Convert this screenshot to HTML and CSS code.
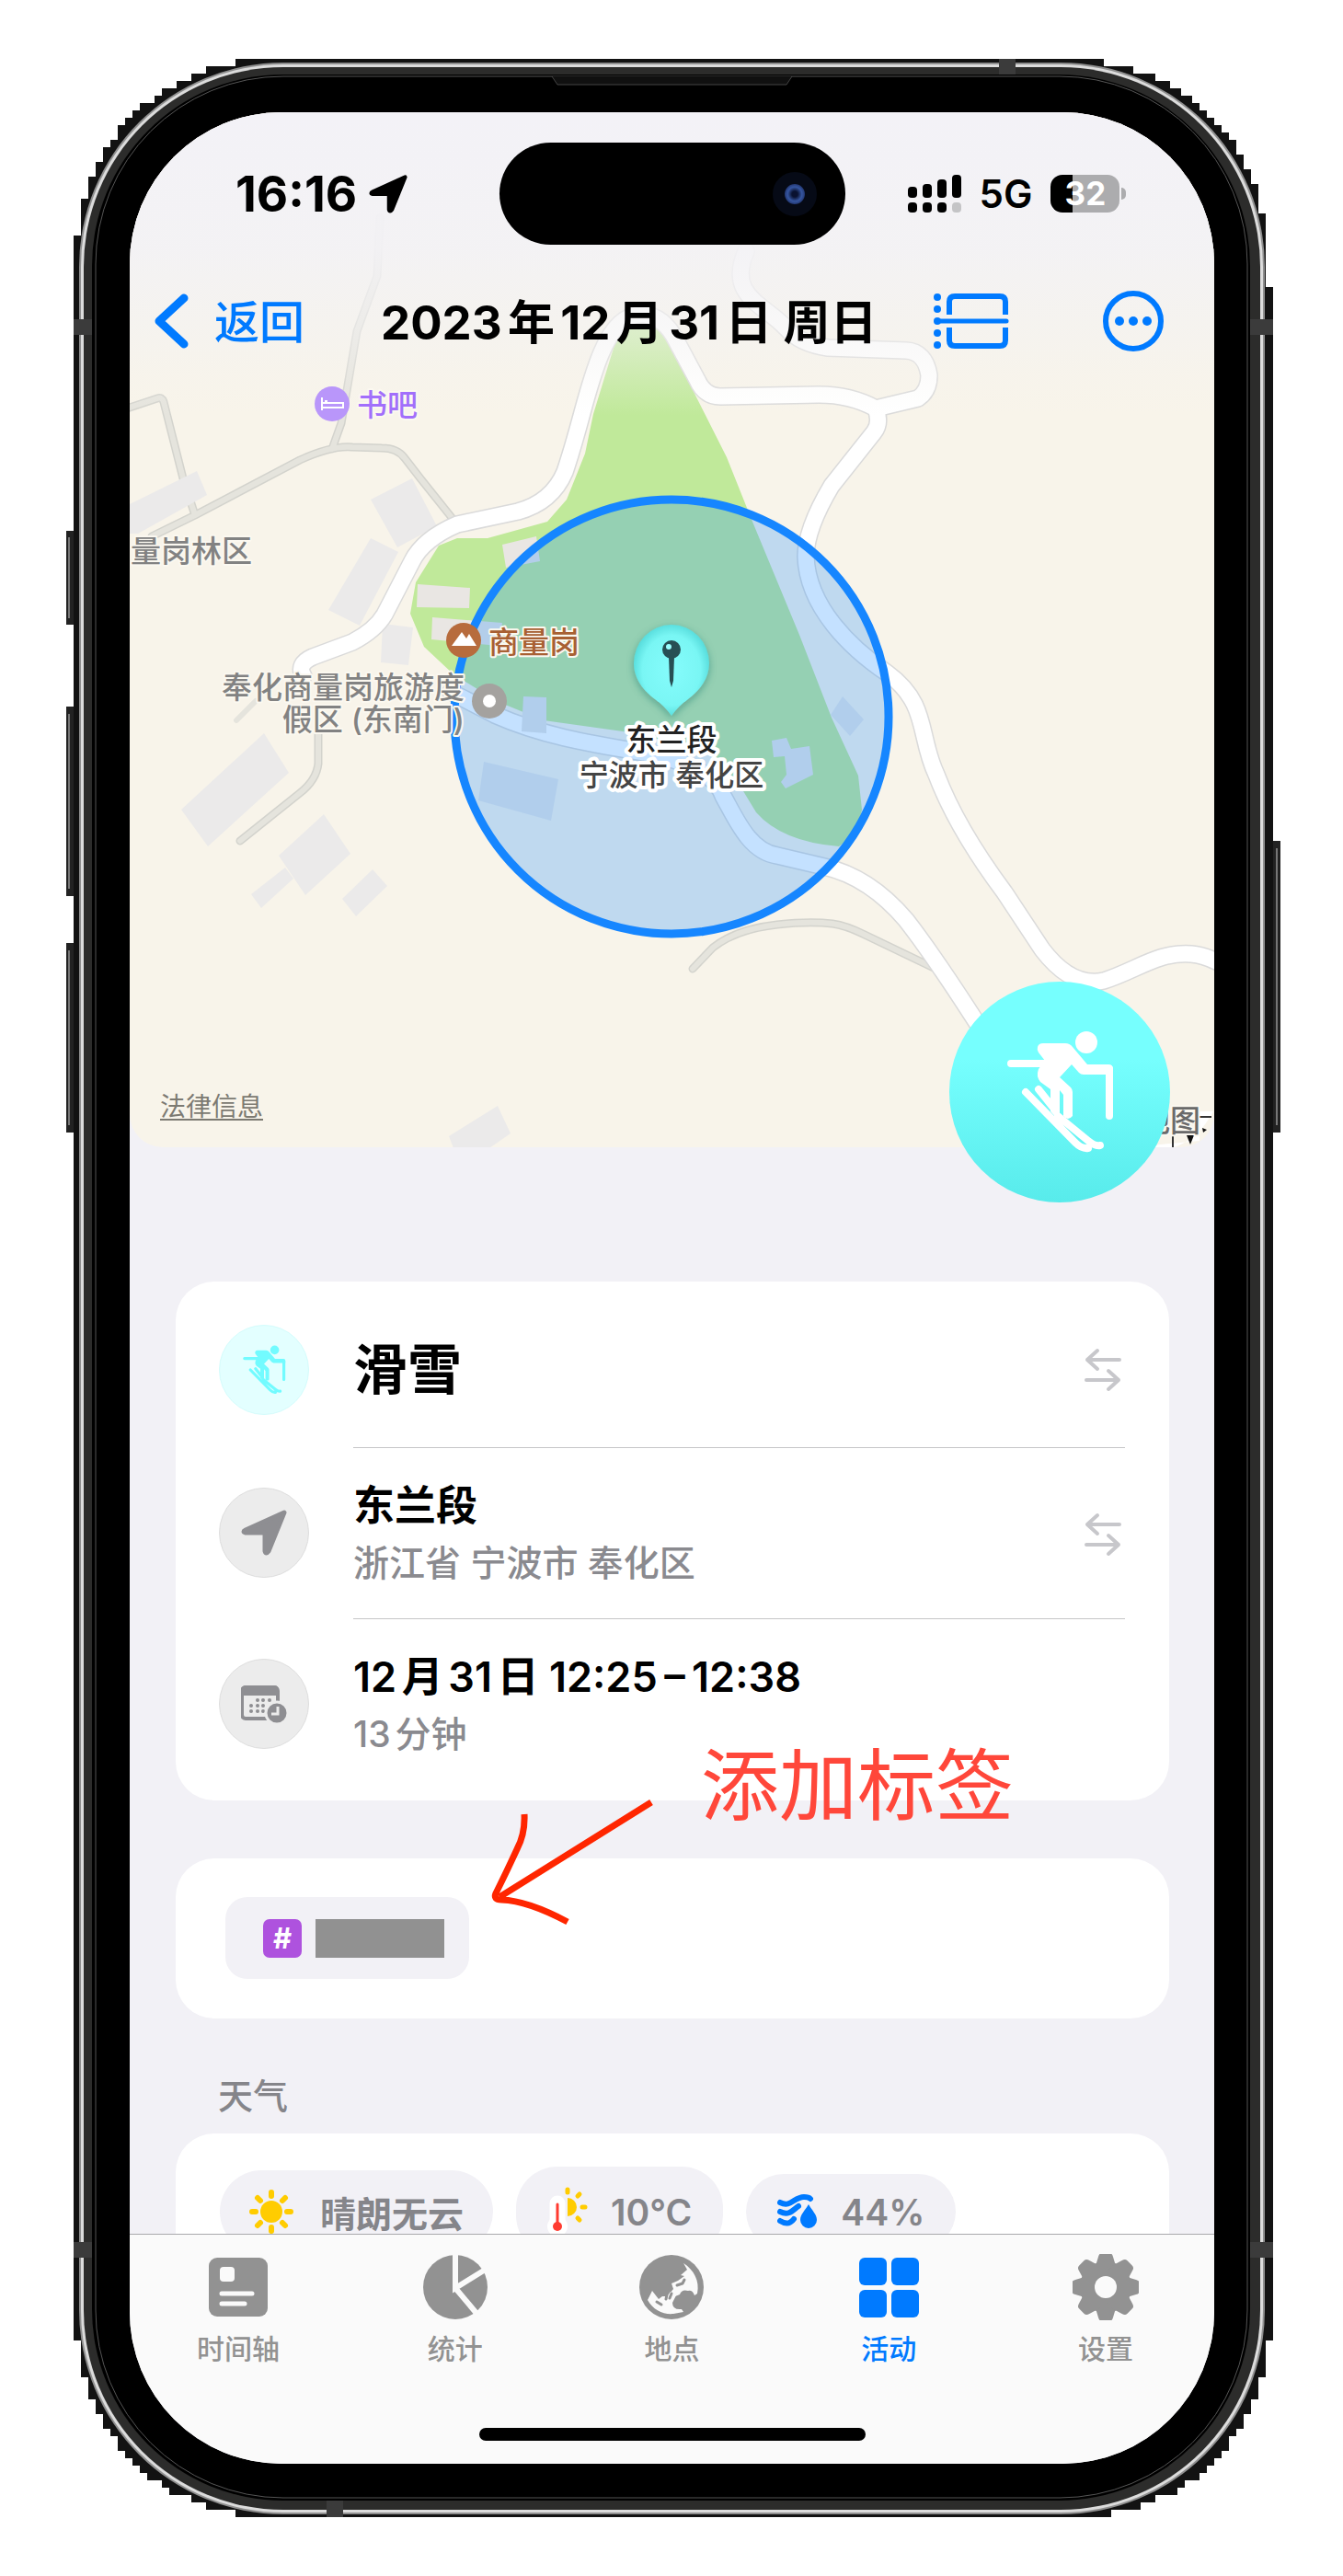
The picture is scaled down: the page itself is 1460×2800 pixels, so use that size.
FILE: index.html
```html
<!DOCTYPE html>
<html lang="zh-CN">
<head>
<meta charset="utf-8">
<meta name="viewport" content="width=device-width, initial-scale=1">
<title>2023年12月31日 周日</title>
<link rel="stylesheet" href="styles.css">
</head>
<body>
<svg class="defs" aria-hidden="true">
  <symbol id="i-ski" viewBox="1031 1067 240 240">
    <g fill="none" stroke="currentColor" stroke-width="8" stroke-linecap="round" stroke-linejoin="round">
      <path d="M1098 1156H1137M1205 1162V1213M1114 1187L1168 1242Q1175 1249 1182 1248M1128 1184L1144 1204M1149 1213L1182 1240Q1189 1246 1195 1245"/>
    </g>
    <ellipse cx="1180" cy="1133" rx="12" ry="12" fill="currentColor"/>
    <path fill="currentColor" d="M1127 1138Q1128 1134 1133 1134H1157Q1162 1134 1165 1138L1181 1157H1204Q1209 1157 1209 1162V1168H1177Q1174 1168 1172 1166L1164 1157L1151 1171L1163 1182Q1165 1184 1165 1187V1213Q1160 1219 1155 1213V1190L1151 1185V1213Q1149 1218 1141 1208V1184L1130 1176Q1125 1170 1128 1162L1135 1153L1128 1144Q1126 1141 1127 1138Z"/>
  </symbol>
  <symbol id="i-arrow" viewBox="0 0 50 50">
    <path fill="currentColor" stroke="currentColor" stroke-width="5" stroke-linejoin="round" d="M47 3L30 45Q27 49 26 45V27Q26 25 24 25H5Q1 24 5 22Z"/>
  </symbol>
  <symbol id="i-swap" viewBox="0 0 40 48">
    <path fill="none" stroke="currentColor" stroke-width="4" stroke-linecap="round" stroke-linejoin="round" d="M38 13H3M14 3L3 13L14 23M2 35H37M26 25L37 35L26 45"/>
  </symbol>
</svg>

<main class="device">
  <svg class="frame" viewBox="80 64 1304 2672" preserveAspectRatio="none" aria-hidden="true">
    <g fill="#222">
      <rect x="72" y="577" width="10" height="102"/>
      <rect x="72" y="768" width="10" height="206"/>
      <rect x="72" y="1025" width="10" height="206"/>
      <rect x="1382" y="914" width="10" height="317"/>
    </g>
    <g fill="#777">
      <rect x="74" y="584" width="2" height="88"/>
      <rect x="74" y="776" width="2" height="190"/>
      <rect x="74" y="1033" width="2" height="190"/>
      <rect x="1387" y="922" width="2" height="301"/>
    </g>
    <path fill="#121212" d="M256 64V72H224V80H208V88H192V96H176V104H168V112H152V120H144V128H136V136H128V152H120V160H112V176H104V192H96V216H88V256H80V2544H88V2584H96V2608H104V2624H112V2640H120V2648H128V2664H136V2672H144V2680H152V2688H160V2696H176V2704H184V2712H208V2720H224V2728H256V2736H1208V2728H1240V2720H1256V2712H1280V2704H1288V2696H1304V2688H1312V2680H1320V2672H1328V2664H1336V2648H1344V2640H1352V2624H1360V2608H1368V2584H1376V2544H1384V312H1376V232H1368V200H1360V184H1352V168H1344V152H1336V144H1328V136H1320V128H1312V120H1304V112H1296V104H1284V96H1272V88H1256V80H1232V72H1200V64Z"/>
    <rect x="86" y="68" width="1289" height="2665" rx="222" fill="#8f8f8f"/>
    <rect x="88" y="70" width="1285" height="2661" rx="220" fill="#dcdcdc"/>
    <rect x="91" y="73" width="1279" height="2655" rx="217" fill="#2c2c2b"/>
    <rect x="100" y="81" width="1259" height="2637" rx="208" fill="#000"/>
    <rect x="104" y="83" width="1252" height="2632" rx="204" fill="#000" stroke="#555"/>
    <path fill="#101010" stroke="#444" d="M600 83L606 92H855L861 83"/>
    <path fill="#3b3b3b" d="M80 347H100V364H80ZM80 2437H100V2454H80ZM1359 347H1384V364H1359ZM1359 2437H1384V2454H1359ZM1086 64H1104V81H1086ZM355 2718H373V2736H355Z"/>
  </svg>

  <div class="screen">
    <section class="hero">
      <svg class="map" viewBox="141 122 1179 1125" preserveAspectRatio="xMidYMid slice" role="img" aria-label="地图">
        <defs>
          <linearGradient id="fade" x1="0" y1="0" x2="0" y2="1">
            <stop offset="0" stop-color="#f3f2f7"/>
            <stop offset="0.45" stop-color="#f3f2f5" stop-opacity="0.93"/>
            <stop offset="0.75" stop-color="#f3f2f2" stop-opacity="0.5"/>
            <stop offset="1" stop-color="#f5f3ee" stop-opacity="0"/>
          </linearGradient>
          <radialGradient id="pinfill" cx="0.5" cy="0.5" r="0.55">
            <stop offset="0" stop-color="#85fcfc"/>
            <stop offset="0.7" stop-color="#79f6f4"/>
            <stop offset="1" stop-color="#4fd6d6"/>
          </radialGradient>
          <filter id="pinshadow" x="-30%" y="-30%" width="160%" height="160%">
            <feDropShadow dx="0" dy="3" stdDeviation="4" flood-color="#1f6b60" flood-opacity="0.45"/>
          </filter>
          <path id="lane" d="M141 443L171 433Q176 431 178 437L199 520L212 560M165 583L212 560L326 500Q361 484 383 486L415 487Q432 487 440 498L457 520L497 570M361 488L371 460L388 360L410 300L413 237M346 795V830Q344 848 326 862L261 914M753 1053L775 1030Q800 1010 845 1005Q880 1001 905 1004Q920 1006 940 1016L1015 1052"/>
          <path id="road" d="M330 735Q322 722 340 714L383 698Q408 685 418 668L448 610Q460 586 497 570L563 556Q600 546 614 513C632 460 638 420 654 383Q672 340 700 342Q722 344 735 370L758 413Q766 431 783 431L890 429Q925 429 952 444L998 433Q1010 425 1010 408Q1006 382 985 381L900 378Q870 374 855 357C830 330 790 322 811 273M952 444Q958 460 950 470L904 528Q876 575 876 605C878 660 925 705 965 732C1010 765 998 800 1018 842Q1040 900 1092 970L1133 1032Q1165 1074 1200 1066C1235 1055 1260 1034 1295 1037Q1308 1038 1322 1045M490 752L538 777C590 800 640 808 700 818Q775 833 786 865C800 890 815 926 845 930L896 942Q945 953 985 1000Q1020 1045 1080 1140"/>
        </defs>
        <rect x="141" y="122" width="1179" height="1125" fill="#f8f4ea"/>
        <g fill="#ebeaea">
          <path d="M403 543L448 520L475 572L432 595ZM403 585L433 600L391 680L357 663ZM416 678L449 682L444 723L414 720ZM287 797L314 840L226 920L197 880ZM352 885L381 928L332 973L303 930ZM310 943L319 955L284 987L273 972ZM405 945L421 963L387 996L372 977ZM541 1202L555 1232L532 1248H493L488 1235Z"/>
        </g>
        <path fill="#c0e99a" d="M698 346L672 362L645 450L636 493L616 543L595 567L530 585H497L477 593L452 633L446 667L461 703L493 733L542 763L591 783L677 795L769 815L802 850L822 883Q850 915 912 920L932 905L937 880L933 843L904 780L869 690L818 567L790 497L741 400L720 355Z"/>
        <path fill="#e9e6e3" d="M454 635L511 639L510 661L453 660ZM470 671L546 677L542 702L469 695ZM546 592L583 583L587 610L550 617Z"/>
        <g fill="none" stroke-linecap="round" stroke-linejoin="round">
          <use href="#lane" stroke="#d3d3cd" stroke-width="9"/>
          <use href="#lane" stroke="#e5e4dd" stroke-width="6"/>
          <path d="M257 783L278 762" stroke="#e5e4dd" stroke-width="6"/>
          <use href="#road" stroke="#dadada" stroke-width="20"/>
          <use href="#road" stroke="#fff" stroke-width="17"/>
        </g>
        <path fill="#ebeaea" d="M214 512L225 538L150 580H141V548Z"/>
        <rect x="141" y="122" width="1179" height="330" fill="url(#fade)"/>
        <circle cx="730" cy="779" r="236" fill="#1487ff" fill-opacity="0.25"/>
        <path fill="#b1ceec" d="M526 828L607 847L599 892L520 870ZM569 757L594 758V797L567 795ZM839 805L855 802L860 814L880 811L884 842L854 857L849 850L855 842L853 822L841 823ZM916 757L939 782L924 800L903 777Z"/>
        <circle cx="730" cy="779" r="236" fill="none" stroke="#1686ff" stroke-width="9"/>

        <circle cx="361" cy="439" r="19" fill="#b996fa"/>
        <path d="M350 432V446M350 443H373V438H350M353 436H356" fill="none" stroke="#fff" stroke-width="2"/>
        <text class="poi poi-hotel" x="388" y="452">书吧</text>

        <text class="poi poi-area" x="142" y="611">量岗林区</text>

        <circle cx="504" cy="696" r="19" fill="#b76c3d"/>
        <path d="M491 702L502 687L507 694L510 689L518 702Z" fill="#fff"/>
        <text class="poi poi-peak" x="531" y="710">商量岗</text>

        <circle cx="532" cy="762" r="19" fill="#a4a29f"/>
        <circle cx="532" cy="762" r="7" fill="#fff"/>
        <text class="poi poi-area" x="505" y="759" text-anchor="end">奉化商量岗旅游度</text>
        <text class="poi poi-area" x="505" y="794" text-anchor="end">假区 (东南门)</text>

        <g filter="url(#pinshadow)">
          <path d="M730 679A41 42 0 0 1 771 721C771 738 760 751 748 760Q738 767 730 778Q722 767 712 760C700 751 689 738 689 721A41 42 0 0 1 730 679Z" fill="url(#pinfill)"/>
        </g>
        <circle cx="730" cy="706" r="10" fill="#274f54"/>
        <path d="M727 714H733L732 740L730 747L728 740Z" fill="#274f54"/>
        <circle cx="727" cy="703" r="3" fill="#9ff"/>
        <text class="poi poi-here" x="730" y="816" text-anchor="middle">东兰段</text>
        <text class="poi poi-city" x="730" y="854" text-anchor="middle">宁波市 奉化区</text>

        <path d="M1230 1247Q1290 1262 1319 1208H1304V1240Z" fill="#fff"/>
        <path d="M1304 1214H1317M1275 1234V1247" stroke="#333" stroke-width="2"/>
        <path d="M1290 1234H1298L1294 1244ZM1307 1226L1312 1228L1308 1231Z" fill="#111"/>
        <text class="poi poi-brand" x="1305" y="1230" text-anchor="end">地图</text>
      </svg>

      <header class="statusbar">
        <div class="status-left">
          <time>16:16</time>
          <svg class="loc" aria-hidden="true"><use href="#i-arrow"/></svg>
        </div>
        <div class="island"><span class="camera"></span></div>
        <div class="status-right">
          <svg width="58" height="42" viewBox="0 0 58 42" aria-hidden="true">
            <rect x="0" y="13" width="10" height="12" rx="4"/><rect x="16" y="10" width="10" height="15" rx="4"/><rect x="32" y="5" width="10" height="20" rx="4"/><rect x="48" y="0" width="10" height="25" rx="4"/>
            <rect x="0" y="30" width="10" height="11" rx="4"/><rect x="16" y="30" width="10" height="11" rx="4"/><rect x="32" y="30" width="10" height="11" rx="4"/><rect x="48" y="30" width="10" height="11" rx="4" fill="#c4c4c6"/>
          </svg>
          <span class="net">5G</span>
          <span class="battery">32</span>
        </div>
      </header>

      <nav class="navbar">
        <a class="back" href="#back">
          <svg width="38" height="60" viewBox="0 0 38 60" aria-hidden="true"><path d="M33 5L6 30L33 55" fill="none" stroke="currentColor" stroke-width="9" stroke-linecap="round" stroke-linejoin="round"/></svg>
          <span>返回</span>
        </a>
        <h1>2023年12月31日 周日</h1>
        <div class="actions">
          <button type="button" aria-label="拆分">
            <svg width="82" height="62" viewBox="0 0 82 62" aria-hidden="true">
              <path d="M17 24V10Q17 4 23 4H72Q78 4 78 10V24M17 38V52Q17 58 23 58H72Q78 58 78 52V38" fill="none" stroke="currentColor" stroke-width="6"/>
              <path d="M4 31H79" stroke="currentColor" stroke-width="5" stroke-linecap="round"/>
              <g fill="currentColor"><circle cx="4" cy="5" r="4"/><circle cx="4" cy="18" r="4"/><circle cx="4" cy="31" r="4"/><circle cx="4" cy="44" r="4"/><circle cx="4" cy="57" r="4"/></g>
            </svg>
          </button>
          <button type="button" aria-label="更多">
            <svg width="66" height="66" viewBox="0 0 66 66" aria-hidden="true">
              <circle cx="33" cy="33" r="30" fill="none" stroke="currentColor" stroke-width="6"/>
              <g fill="currentColor"><circle cx="18" cy="33" r="5"/><circle cx="33" cy="33" r="5"/><circle cx="48" cy="33" r="5"/></g>
            </svg>
          </button>
        </div>
      </nav>
      <a class="legal" href="#legal">法律信息</a>
      <div class="ski-badge"><svg aria-hidden="true"><use href="#i-ski"/></svg></div>
    </section>

    <section class="content">
      <div class="card rows">
        <div class="row first">
          <span class="bubble cyan"><svg class="full" aria-hidden="true"><use href="#i-ski"/></svg></span>
          <div class="body"><h2>滑雪</h2>
            <button type="button" aria-label="更换活动"><svg class="swap" aria-hidden="true"><use href="#i-swap"/></svg></button></div>
        </div>
        <div class="row">
          <span class="bubble"><svg class="glyph" aria-hidden="true"><use href="#i-arrow"/></svg></span>
          <div class="body"><div><p class="main">东兰段</p><p class="sub">浙江省 宁波市 奉化区</p></div>
            <button type="button" aria-label="更换地点"><svg class="swap" aria-hidden="true"><use href="#i-swap"/></svg></button></div>
        </div>
        <div class="row last">
          <span class="bubble">
            <svg class="glyph" viewBox="0 0 50 50" aria-hidden="true">
              <rect x="1" y="7" width="39" height="34" rx="4" fill="none" stroke="currentColor" stroke-width="4"/>
              <path d="M0 16V10Q0 5 6 5H36Q41 5 41 10V16Z" fill="currentColor"/>
              <g fill="currentColor"><circle cx="18" cy="21" r="2"/><circle cx="24" cy="21" r="2"/><circle cx="31" cy="21" r="2"/><circle cx="11" cy="27" r="2"/><circle cx="18" cy="27" r="2"/><circle cx="24" cy="27" r="2"/><circle cx="11" cy="33" r="2"/><circle cx="18" cy="33" r="2"/><circle cx="24" cy="33" r="2"/></g>
              <circle cx="39" cy="35" r="12" fill="currentColor" stroke="#ececec" stroke-width="3"/>
              <path d="M40 28V36H33" fill="none" stroke="#ececec" stroke-width="3"/>
            </svg>
          </span>
          <div class="body"><div><p class="main">12月31日 12:25&thinsp;–&thinsp;12:38</p><p class="sub">13分钟</p></div></div>
        </div>
      </div>

      <div class="card tags">
        <button type="button" class="tag" aria-label="标签"><span class="hash">#</span><span class="redacted"></span></button>
        <div class="note">
          <svg viewBox="530 1950 190 150" aria-hidden="true"><path d="M708 1959L543 2062M570 1972Q571 1993 562 2010Q550 2036 539 2058Q536 2065 545 2065Q574 2066 617 2089" fill="none" stroke="#ff2600" stroke-width="7" stroke-linejoin="round"/></svg>
          <span>添加标签</span>
        </div>
      </div>

      <h3>天气</h3>
      <div class="card weather">
        <span class="chip sky">
          <svg width="48" height="48" viewBox="0 0 48 48" aria-hidden="true"><circle cx="24" cy="24" r="12" fill="#fc0"/><path d="M24 3V7M24 41V45M3 24H7M41 24H45M9 9L12 12M36 36L39 39M39 9L36 12M12 36L9 39" stroke="#fc0" stroke-width="6" stroke-linecap="round"/></svg>
          晴朗无云
        </span>
        <span class="chip temp">
          <svg width="44" height="54" viewBox="0 0 44 54" aria-hidden="true">
            <g stroke="#fc0" stroke-width="5" stroke-linecap="round"><path d="M22 3V6M38 22H41M33 10L35 8M33 34L35 36"/></g>
            <path d="M22 12A10 10 0 0 1 22 32Z" fill="#fc0"/>
            <path d="M11 18V42" stroke="#fff" stroke-width="17" stroke-linecap="round"/><circle cx="11" cy="43" r="11" fill="#fff"/>
            <path d="M11 19V42" stroke="#ff3b30" stroke-width="3" stroke-linecap="round"/><circle cx="11" cy="43" r="5" fill="#ff3b30"/>
          </svg>
          10°C
        </span>
        <span class="chip humid">
          <svg width="44" height="38" viewBox="0 0 44 38" aria-hidden="true">
            <g fill="none" stroke="#007aff" stroke-width="6" stroke-linecap="round"><path d="M3 9C15 15 18 3 29 3Q34 3 36 5M3 19C13 24 17 17 23 13M3 29C11 34 15 31 18 27"/></g>
            <path d="M34 11C38 18 43 22 43 28A9 9 0 0 1 25 28C25 22 30 18 34 11Z" fill="#007aff"/>
          </svg>
          44%
        </span>
      </div>
    </section>

    <footer class="tabbar">
      <nav class="tabs">
        <a href="#timeline">
          <svg viewBox="0 0 72 72" aria-hidden="true"><rect x="4" y="4" width="64" height="64" rx="9" fill="currentColor"/><rect x="16" y="14" width="16" height="16" rx="4" fill="#fafafa"/><path d="M18 43H51M18 54H43" stroke="#fafafa" stroke-width="5" stroke-linecap="round"/></svg>
          时间轴</a>
        <a href="#stats">
          <svg viewBox="0 0 72 72" aria-hidden="true"><circle cx="36" cy="36" r="35" fill="currentColor"/><path d="M36 0V37L70 16M36 37L62 68" fill="none" stroke="#fafafa" stroke-width="6"/></svg>
          统计</a>
        <a href="#places">
          <svg viewBox="0 0 72 72" aria-hidden="true"><circle cx="36" cy="36" r="35" fill="currentColor"/>
            <path fill="#fafafa" d="M49 10C60 17 67 29 64 43L61 45Q59 39 54 40Q47 38 45 44L40 46L34 43L38 38L36 32L43 29L50 24L46 23L53 17Z"/>
            <path fill="#fafafa" d="M15 40L10 50C16 61 27 66 38 65L49 63L47 60Q37 61 37 53L41 45L35 41L31 46H26L22 49Z"/>
            <path d="M42 34L48 32L50 28M36 43L34 48M31 44L30 49M20 52L25 55" stroke="currentColor" stroke-width="3" stroke-linecap="round" fill="none"/></svg>
          地点</a>
        <a href="#activity" class="on" aria-current="page">
          <svg viewBox="0 0 72 72" aria-hidden="true"><g fill="currentColor"><rect x="4" y="4" width="30" height="30" rx="6"/><rect x="39" y="4" width="30" height="30" rx="6"/><rect x="4" y="39" width="30" height="30" rx="6"/><rect x="39" y="39" width="30" height="30" rx="6"/></g></svg>
          活动</a>
        <a href="#settings">
          <svg viewBox="1 1 72 72" aria-hidden="true"><g fill="currentColor"><circle cx="37" cy="37" r="28"/><path id="tooth" d="M33 0H41Q44 0 45 4L48 14V60L45 70Q44 74 41 74H33Q30 74 29 70L26 60V14L29 4Q30 0 33 0Z"/><use href="#tooth" transform="rotate(45 37 37)"/><use href="#tooth" transform="rotate(90 37 37)"/><use href="#tooth" transform="rotate(135 37 37)"/></g><circle cx="37" cy="37" r="12" fill="#fafafa"/></svg>
          设置</a>
      </nav>
      <div class="home"></div>
    </footer>
  </div>
</main>
</body>
</html>
```
FILE: styles.css
```css
* { box-sizing: border-box; }

body {
  margin: 0;
  background: #fff;
  color: #000;
  font-family: Inter, "Noto Sans CJK SC", sans-serif;
  text-autospace: normal;
}

h1, h2, h3, p { margin: 0; }

button {
  margin: 0;
  padding: 0;
  border: 0;
  background: none;
  color: inherit;
  font: inherit;
}

svg { display: block; flex: none; }
.defs { position: absolute; width: 0; height: 0; }

/* phone body */
.device {
  position: relative;
  margin: 64px 76px 64px 80px;
  padding: 58px 64px 58px 61px;
}
.frame {
  position: absolute;
  inset: 0;
  width: 100%;
  height: 100%;
  overflow: visible;
}
.screen {
  position: relative;
  overflow: hidden;
  border-radius: 165px;
  background: #f2f1f6;
}

/* map header */
.hero { position: relative; height: 1125px; }
.map {
  position: absolute;
  inset: 0;
  width: 100%;
  height: 100%;
  border-radius: 0 0 36px 36px;
}
.poi {
  font-size: 33px;
  font-weight: 500;
  paint-order: stroke;
  stroke: #fbf8f0;
  stroke-width: 4px;
  stroke-linejoin: round;
}
.poi-hotel { fill: #a26ffb; }
.poi-area { fill: #828282; }
.poi-peak { fill: #a86033; }
.poi-here { fill: #222; stroke: #fff; stroke-width: 8px; }
.poi-city { fill: #444; font-size: 32px; stroke: #fff; stroke-width: 8px; }
.poi-brand { fill: #6a6a6a; }

.statusbar {
  position: relative;
  display: grid;
  grid-template-columns: 1fr 376px 1fr;
  align-items: center;
  padding-top: 33px;
}
.status-left {
  display: flex;
  align-items: center;
  gap: 13px;
  padding-left: 115px;
  font-size: 53px;
  font-weight: 700;
}
.loc { width: 42px; height: 42px; }
.island {
  display: flex;
  align-items: center;
  justify-content: flex-end;
  height: 111px;
  padding-right: 31px;
  border-radius: 56px;
  background: #000;
}
.camera {
  width: 48px;
  height: 48px;
  border: 13px solid #060a16;
  border-radius: 50%;
  background: radial-gradient(circle, #0a1230 20%, #3555a0 50%, #1b2a5c 80%);
}
.status-right {
  display: flex;
  align-items: center;
  gap: 20px;
  padding-left: 68px;
}
.net { font-size: 42px; font-weight: 600; }
.battery {
  position: relative;
  width: 75px;
  height: 41px;
  border-radius: 13px;
  background: linear-gradient(90deg, #000 24px, #acacae 24px);
  color: #fff;
  font-size: 35px;
  font-weight: 700;
  line-height: 41px;
  text-align: center;
}
.battery::after {
  content: "";
  position: absolute;
  top: 14px;
  right: -7px;
  width: 5px;
  height: 13px;
  border-radius: 0 5px 5px 0;
  background: #acacae;
}

.navbar {
  position: relative;
  display: flex;
  align-items: center;
  height: 166px;
  padding: 0 55px 0 26px;
}
.back {
  display: flex;
  align-items: center;
  gap: 28px;
  color: #007aff;
  font-size: 49px;
  font-weight: 500;
  text-decoration: none;
}
.back span, h1 { padding-bottom: 5px; }
h1 {
  margin-left: 83px;
  font-size: 51px;
  font-weight: 700;
  white-space: nowrap;
}
.actions {
  display: flex;
  align-items: center;
  gap: 102px;
  margin-left: auto;
  color: #007aff;
}
.legal {
  position: absolute;
  left: 33px;
  bottom: 24px;
  color: #7c7a72;
  font-size: 28px;
  line-height: 40px;
  text-underline-offset: 3px;
}
.ski-badge {
  position: absolute;
  right: 48px;
  bottom: -60px;
  width: 240px;
  height: 240px;
  border-radius: 50%;
  background: linear-gradient(#76fffe 35%, #58ebeb);
  color: #fff;
}
.ski-badge svg, .full { width: 100%; height: 100%; }

/* cards */
.content { padding: 146px 49px 0 50px; }
.card { border-radius: 42px; background: #fff; }

.rows { padding: 0 48px 0 47px; }
.row { display: flex; gap: 48px; }
.bubble {
  display: grid;
  flex: none;
  place-items: center;
  width: 98px;
  height: 98px;
  margin-top: 43px;
  border: 1px solid #dedede;
  border-radius: 50%;
  background: #ececec;
  color: #8e8e92;
}
.bubble.cyan { border-color: #d4fcfc; background: #e3ffff; color: #72fbff; }
.glyph { width: 50px; height: 50px; }
.body {
  display: flex;
  flex: 1;
  align-items: center;
  justify-content: space-between;
  padding: 32px 4px 29px 0;
  border-bottom: 1px solid #c6c6c8;
}
.first .bubble { margin-top: 47px; }
.first .body { padding: 46px 4px 34px 0; }
.last .body { padding-bottom: 41px; border-bottom: 0; }
h2 { font-size: 59px; font-weight: 700; line-height: 100px; }
.main { font-size: 45px; font-weight: 600; line-height: 62px; }
.sub { color: #8a8a8f; font-size: 39px; font-weight: 500; line-height: 62px; }
.swap { width: 40px; height: 48px; color: #c7c7cb; }

.tags {
  position: relative;
  margin-top: 63px;
  padding: 42px 54px 43px;
}
.tag {
  display: flex;
  align-items: center;
  gap: 15px;
  height: 89px;
  padding: 0 27px 0 41px;
  border-radius: 24px;
  background: #f2f1f6;
}
.hash {
  width: 42px;
  height: 42px;
  border-radius: 7px;
  background: #ae52de;
  color: #fff;
  font-size: 31px;
  font-weight: 700;
  line-height: 42px;
}
.redacted { width: 140px; height: 42px; background: #919191; }
.note {
  position: absolute;
  top: -140px;
  left: 339px;
  display: flex;
  gap: 42px;
  color: #ff473a;
  font-size: 85px;
  line-height: 124px;
  white-space: nowrap;
}
.note svg { width: 190px; height: 150px; margin-top: 70px; }

h3 {
  margin: 56px 0 12px 46px;
  color: #85858a;
  font-size: 38px;
  font-weight: 500;
  line-height: 57px;
}
.weather {
  display: flex;
  align-items: center;
  gap: 25px;
  height: 200px;
  padding: 0 48px 30px;
}
.chip {
  display: flex;
  align-items: center;
  height: 90px;
  padding: 0 32px;
  border-radius: 45px;
  background: #f2f1f6;
  color: #85858a;
  font-size: 39px;
  font-weight: 600;
  white-space: nowrap;
}
.sky { gap: 29px; }
.temp { gap: 25px; height: 98px; padding: 0 34px; }
.humid { gap: 25px; height: 82px; padding: 0 34px; }

/* tab bar */
.tabbar {
  position: relative;
  margin-top: -91px;
  padding: 21px 0 25px;
  border-top: 1px solid #a9a9ac;
  background: #fafafa;
}
.tabs { display: grid; grid-template-columns: repeat(5, 1fr); }
.tabs a {
  display: flex;
  flex-direction: column;
  align-items: center;
  gap: 11px;
  color: #929292;
  font-size: 30px;
  font-weight: 500;
  line-height: 40px;
  text-decoration: none;
}
.tabs svg { width: 72px; height: 72px; }
.tabs .on { color: #007aff; }
.home {
  width: 420px;
  height: 14px;
  margin: 66px auto 0;
  border-radius: 7px;
  background: #000;
}
```
